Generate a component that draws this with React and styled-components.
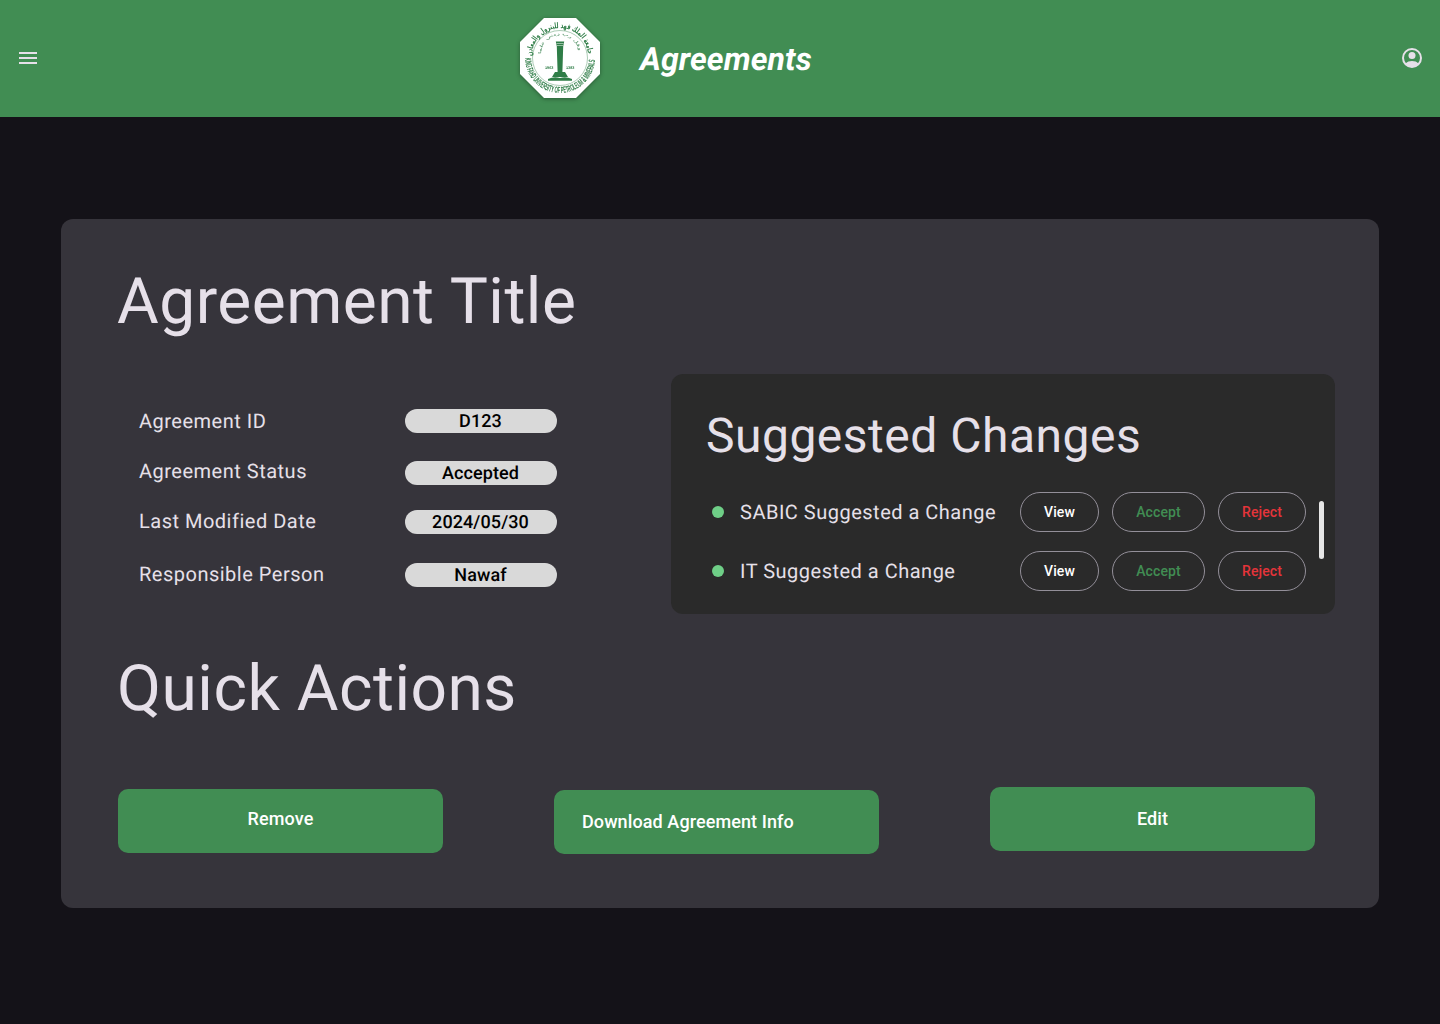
import { Fragment } from "react";
import styled, { createGlobalStyle } from "styled-components";

const GlobalStyle = createGlobalStyle`
  html, body {
    margin: 0;
    padding: 0;
    background: #141218;
    font-family: Roboto, "Liberation Sans", sans-serif;
    text-rendering: geometricPrecision;
  }
`;

const Page = styled.div`
  width: 1440px;
  height: 1024px;
  overflow: hidden;
  background: #141218;
`;

const Header = styled.header`
  height: 117px;
  background: #418d53;
  display: flex;
  align-items: center;
  padding: 0 16px 1px;
  box-sizing: border-box;
`;

const IconSlot = styled.svg`
  width: 24px;
  height: 24px;
  flex: none;
  fill: #e6e0e9;
`;

const LogoWrap = styled.div`
  width: 80px;
  height: 80px;
  margin-left: 480px;
  flex: none;
  filter: drop-shadow(0 1px 2px rgba(0, 0, 0, 0.35));
`;

const PageTitle = styled.h1`
  margin: 2px 0 0 40px;
  font-size: 32px;
  line-height: 40px;
  font-weight: 700;
  font-style: italic;
  letter-spacing: 0.1px;
  color: #fff;
`;

const Spacer = styled.div`
  flex: 1;
`;

const Main = styled.main`
  padding: 102px 61px 0;
`;

const Card = styled.section`
  height: 689px;
  box-sizing: border-box;
  background: #36343b;
  border-radius: 12px;
  padding: 47px 44px 0 57px;
`;

const Display = styled.h2`
  margin: 0 0 0 -1px;
  font-size: 64px;
  line-height: 72px;
  font-weight: 400;
  letter-spacing: 0.5px;
  color: #e6e0e9;
`;

const TopRow = styled.div`
  display: flex;
  justify-content: space-between;
  margin-top: 36px;
  height: 240px;
`;

const Details = styled.div`
  display: grid;
  grid-template-rows: 50px 50px 53px auto;
  grid-template-columns: 266px 152px;
  padding: 35px 0 0 21px;
  align-content: start;
`;

const Label = styled.div`
  font-size: 20px;
  line-height: 24px;
  letter-spacing: 0.5px;
  color: #e6e0e9;
`;

const Pill = styled.div`
  height: 24px;
  margin-top: ${(p) => p.$offset || 0}px;
  padding-right: 1px;
  box-sizing: border-box;
  border-radius: 12px;
  background: #d9d9d9;
  color: #000;
  font-size: 18px;
  font-weight: 500;
  letter-spacing: 0.1px;
  line-height: 25px;
  text-align: center;
`;

const Changes = styled.div`
  position: relative;
  width: 664px;
  box-sizing: border-box;
  padding: 32px 29px 0 36px;
  background: #2a2a2a;
  border-radius: 12px;
`;

const ChangesTitle = styled.h3`
  margin: 0 0 26px -1px;
  font-size: 48px;
  line-height: 60px;
  font-weight: 400;
  letter-spacing: 0.5px;
  color: #e6e0e9;
`;

const ChangeRow = styled.div`
  display: flex;
  align-items: center;
  height: 40px;
  margin-bottom: 19px;
  padding-left: 5px;
`;

const Dot = styled.span`
  width: 12px;
  height: 12px;
  border-radius: 50%;
  background: #6fcf87;
  flex: none;
`;

const ChangeText = styled.span`
  width: 280px;
  margin-left: 16px;
  font-size: 20px;
  letter-spacing: 0.5px;
  color: #e6e0e9;
  flex: none;
`;

const colors = { view: "#ffffff", accept: "#418d53", reject: "#e5343a" };

const ActionPill = styled.button`
  width: ${(p) => p.$width}px;
  height: 40px;
  margin-right: 13px;
  padding: 0;
  flex: none;
  box-sizing: border-box;
  background: transparent;
  border: 1px solid #938f99;
  border-radius: 20px;
  font-family: inherit;
  font-size: 14px;
  font-weight: 500;
  letter-spacing: 0.1px;
  color: ${(p) => colors[p.$kind]};
`;

const Scrollbar = styled.div`
  position: absolute;
  top: 127px;
  right: 11px;
  width: 5px;
  height: 58px;
  border-radius: 3px;
  background: #e6e6e6;
`;

const QuickTitle = styled(Display)`
  margin-top: 39px;
`;

const ButtonRow = styled.div`
  display: flex;
  align-items: flex-start;
  gap: 111px;
  margin-top: 62px;
`;

const BigButton = styled.button`
  width: 325px;
  height: 64px;
  margin-top: ${(p) => p.$offset || 0}px;
  padding: 0 ${(p) => (p.$start ? "28px" : "0")} ${(p) => p.$lift || 0}px;
  box-sizing: border-box;
  border: none;
  border-radius: 10px;
  background: #418d53;
  color: #fff;
  font-family: inherit;
  font-size: 18px;
  font-weight: 500;
  letter-spacing: 0.1px;
  text-align: ${(p) => (p.$start ? "left" : "center")};
`;

const LOGO_GREEN = "#2f7d47";

const Logo = () => (
  <svg viewBox="0 0 80 80" width="80" height="80">
    <defs>
      <path id="arcBottom" d="M5 40 A35 35 0 0 0 75 40" />
      <path id="arcTop" d="M12 38 A28 28 0 0 1 68 38" />
      <path id="arcInner" d="M21 36 A19 19 0 0 1 59 36" />
    </defs>
    <polygon points="24,0 56,0 80,24 80,56 56,80 24,80 0,56 0,24" fill="#fff" />
    <circle cx="40" cy="40" r="27.5" fill="none" stroke={LOGO_GREEN} strokeWidth="0.4" />
    <text fontFamily="Liberation Sans, sans-serif" fontSize="9" fontWeight="700" fill={LOGO_GREEN}>
      <textPath href="#arcBottom" textLength="108" lengthAdjust="spacingAndGlyphs">
        KING FAHD UNIVERSITY OF PETROLEUM &amp; MINERALS
      </textPath>
    </text>
    <text fontFamily="DejaVu Sans, sans-serif" fontSize="8" fontWeight="700" fill={LOGO_GREEN}>
      <textPath href="#arcTop" textLength="86" lengthAdjust="spacingAndGlyphs">
        جامعة الملك فهد للبترول والمعادن
      </textPath>
    </text>
    <text fontFamily="DejaVu Sans, sans-serif" fontSize="4" fill={LOGO_GREEN}>
      <textPath href="#arcInner" textLength="56" lengthAdjust="spacingAndGlyphs">
        وقل رب زدني علما
      </textPath>
    </text>
    <path d="M35.800 23.500 h8.400 l-1 5 l-.8 25.500 h-4.800 l-.8 -25.500 z" fill={LOGO_GREEN} />
    <path d="M36.500 25.500 h7 M36.800 27.500 h6.400" stroke="#fff" strokeWidth="0.5" />
    <path d="M28 61 q6 -3 12 -1 q6 -2 12 1 v1.800 h-24 z" fill={LOGO_GREEN} />
    <path d="M32 59 l3 -5 h10 l3 5 z" fill={LOGO_GREEN} />
    <text x="25" y="51" fontFamily="Liberation Sans, sans-serif" fontSize="3.800" fontWeight="700" fill={LOGO_GREEN}>
      1963
    </text>
    <text x="46" y="51" fontFamily="Liberation Sans, sans-serif" fontSize="3.800" fontWeight="700" fill={LOGO_GREEN}>
      1383
    </text>
  </svg>
);

const details = [
  ["Agreement ID", "D123", 0],
  ["Agreement Status", "Accepted", 2],
  ["Last Modified Date", "2024/05/30", 1],
  ["Responsible Person", "Nawaf", 1],
];

const changes = ["SABIC Suggested a Change", "IT Suggested a Change"];

export default function App() {
  return (
    <Page>
      <GlobalStyle />
      <Header>
        <IconSlot viewBox="0 0 24 24">
          <path d="M3 18h18v-2H3v2zm0-5h18v-2H3v2zm0-7v2h18V6H3z" />
        </IconSlot>
        <LogoWrap>
          <Logo />
        </LogoWrap>
        <PageTitle>Agreements</PageTitle>
        <Spacer />
        <IconSlot viewBox="0 0 24 24">
          <circle cx="12" cy="12" r="9" fill="none" stroke="#e6e0e9" strokeWidth="2" />
          <circle cx="12" cy="9.500" r="3.500" />
          <path d="M5.500 17.500C7 15.800 9.500 15 12 15s5 .8 6.500 2.500C16.800 19.600 14.500 21 12 21s-4.800-1.400-6.500-3.500z" />
        </IconSlot>
      </Header>
      <Main>
        <Card>
          <Display>Agreement Title</Display>
          <TopRow>
            <Details>
              {details.map(([label, value, offset]) => (
                <Fragment key={label}>
                  <Label>{label}</Label>
                  <Pill $offset={offset}>{value}</Pill>
                </Fragment>
              ))}
            </Details>
            <Changes>
              <ChangesTitle>Suggested Changes</ChangesTitle>
              {changes.map((text) => (
                <ChangeRow key={text}>
                  <Dot />
                  <ChangeText>{text}</ChangeText>
                  <ActionPill $kind="view" $width={79}>View</ActionPill>
                  <ActionPill $kind="accept" $width={93}>Accept</ActionPill>
                  <ActionPill $kind="reject" $width={88}>Reject</ActionPill>
                </ChangeRow>
              ))}
              <Scrollbar />
            </Changes>
          </TopRow>
          <QuickTitle>Quick Actions</QuickTitle>
          <ButtonRow>
            <BigButton $offset={2} $lift={6}>Remove</BigButton>
            <BigButton $offset={3} $lift={1} $start>Download Agreement Info</BigButton>
            <BigButton $lift={2}>Edit</BigButton>
          </ButtonRow>
        </Card>
      </Main>
    </Page>
  );
}
